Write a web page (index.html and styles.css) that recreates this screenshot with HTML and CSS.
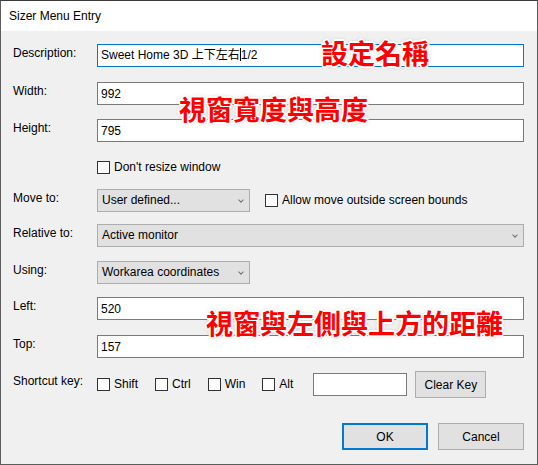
FILE: index.html
```html
<!DOCTYPE html>
<html lang="en">
<head>
    <meta charset="UTF-8">
    <title>Sizer Menu Entry</title>
    <link rel="stylesheet" href="styles.css">
</head>
<body>
    <div class="dialog">
        <div class="titlebar">Sizer Menu Entry</div>

        <div class="form">
            <label class="label">Description:</label>
            <div class="field focused">Sweet Home 3D 上下左右<span class="caret"></span>1/2</div>

            <label class="label">Width:</label>
            <input type="text" class="field" value="992">

            <label class="label">Height:</label>
            <input type="text" class="field" value="795">

            <span></span>
            <label class="check"><span class="box"></span>Don't resize window</label>

            <label class="label">Move to:</label>
            <div class="inline">
                <div class="select short">User defined...<span class="arrow"></span></div>
                <label class="check"><span class="box"></span>Allow move outside screen bounds</label>
            </div>

            <label class="label">Relative to:</label>
            <div class="select">Active monitor<span class="arrow"></span></div>

            <label class="label">Using:</label>
            <div class="select short">Workarea coordinates<span class="arrow"></span></div>

            <label class="label">Left:</label>
            <input type="text" class="field" value="520">

            <label class="label">Top:</label>
            <input type="text" class="field" value="157">

            <label class="label shortcut-label">Shortcut key:</label>
            <div class="shortcut">
                <label class="check"><span class="box"></span>Shift</label>
                <label class="check"><span class="box"></span>Ctrl</label>
                <label class="check"><span class="box"></span>Win</label>
                <label class="check"><span class="box"></span>Alt</label>
                <input type="text" class="field key">
                <button type="button" class="btn clear">Clear Key</button>
            </div>

            <div class="actions">
                <button type="button" class="btn default">OK</button>
                <button type="button" class="btn">Cancel</button>
            </div>
        </div>

        <div class="note note-name">設定名稱</div>
        <div class="note note-size">視窗寬度與高度</div>
        <div class="note note-pos">視窗與左側與上方的距離</div>
    </div>
</body>
</html>
```

FILE: styles.css
```css
* {
    box-sizing: border-box;
}

body {
    margin: 0;
    font-family: 'Liberation Sans', 'Noto Sans CJK TC', sans-serif;
    font-size: 12px;
    color: #000;
    background: #fff;
}

.dialog {
    position: relative;
    width: 538px;
    height: 465px;
    border: 1px solid #5c5c5c;
    border-top-color: #3c3c3c;
    background: #f0f0f0;
    overflow: hidden;
}

.titlebar {
    height: 30px;
    padding: 8px 0 0 8px;
    background: #fff;
    line-height: 14px;
}

.form {
    display: grid;
    grid-template-columns: 84px 1fr;
    grid-template-rows: 38px 37px 39px 31px 35px 37px 36px 38px 36px 52px 27px;
    padding: 13px 13px 0 12px;
    align-items: start;
}

.label {
    line-height: 18px;
}

.field {
    display: block;
    width: 100%;
    height: 23px;
    margin: 0;
    padding: 0 3px;
    border: 1px solid #7a7a7a;
    background: #fff;
    font: inherit;
    line-height: 21px;
    color: #000;
    outline: none;
}

.field.focused {
    border-color: #0078d7;
    white-space: nowrap;
}

.caret {
    display: inline-block;
    width: 1px;
    height: 13px;
    margin: 0 0 -2px;
    background: #000;
    vertical-align: baseline;
}

.check {
    display: inline-flex;
    align-items: center;
    gap: 4px;
    line-height: 17px;
    padding-top: 1px;
}

.box {
    width: 13px;
    height: 13px;
    border: 1px solid #333;
    background: #fff;
}

.inline {
    display: flex;
    align-items: center;
    gap: 15px;
}

.inline .check {
    padding-top: 0;
}

.select {
    position: relative;
    height: 23px;
    padding: 0 20px 0 4px;
    border: 1px solid #adadad;
    background: #e1e1e1;
    line-height: 21px;
}

.select.short {
    width: 153px;
}

.arrow {
    position: absolute;
    right: 6px;
    top: 8px;
    width: 4px;
    height: 4px;
    border-right: 1px solid #707070;
    border-bottom: 1px solid #707070;
    transform: rotate(45deg);
}

.shortcut-label {
    line-height: 21px;
}

.shortcut {
    display: flex;
    align-items: center;
    height: 27px;
}

.shortcut .check {
    padding-top: 0;
    margin-right: 17px;
}

.shortcut .check:nth-child(4) {
    margin-right: 20px;
}

.field.key {
    width: 94px;
    margin-right: 8px;
}

.btn {
    height: 27px;
    margin: 0;
    padding: 0;
    border: 1px solid #adadad;
    background: #e1e1e1;
    font: inherit;
    color: #000;
}

.btn.clear {
    width: 71px;
}

.actions {
    grid-column: 1 / 3;
    display: flex;
    justify-content: flex-end;
    gap: 10px;
}

.actions .btn {
    width: 86px;
}

.btn.default {
    border: 2px solid #0078d7;
}

.note {
    position: absolute;
    font-family: 'Noto Sans CJK TC', sans-serif;
    font-weight: 700;
    font-size: 27px;
    line-height: 27px;
    color: #ff0000;
    white-space: nowrap;
    text-shadow: 1px 1px 0 #fff, -1px -1px 0 #fff, 1px -1px 0 #fff, -1px 1px 0 #fff,
        0 2px 0 #fff, 2px 0 0 #fff, 0 -2px 0 #fff, -2px 0 0 #fff,
        0 0 4px rgba(0, 0, 0, 0.35);
}

.note-name {
    left: 320px;
    top: 38px;
}

.note-size {
    left: 178px;
    top: 94px;
}

.note-pos {
    left: 205px;
    top: 308px;
}
```
